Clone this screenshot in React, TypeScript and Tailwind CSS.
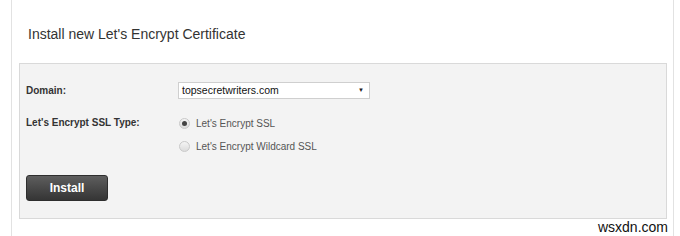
import React from 'react';

const Radio: React.FC<{ checked?: boolean; label: string }> = ({ checked, label }) => (
  <label className="flex items-center gap-[6px] h-[12px] text-[10px] text-[#555]">
    <span className="w-[11px] h-[11px] rounded-full border border-[#c9c9c9] bg-gradient-to-b from-[#f4f4f4] to-[#dcdcdc] flex items-center justify-center">
      {checked && <span className="w-[5px] h-[5px] rounded-full bg-[#444]" />}
    </span>
    <span>{label}</span>
  </label>
);

export default function App() {
  return (
    <div className="w-[680px] h-[236px] bg-white relative overflow-hidden" style={{ fontFamily: '"Liberation Sans", Arial, sans-serif' }}>
      <div className="ml-[11px] mr-[6px] h-full border-l border-r border-[#e2e2e2] pt-[26px] pl-[16px] pr-[6px]">
        <h2 className="text-[14px] leading-[16px] text-[#333] mb-[21px]">Install new Let's Encrypt Certificate</h2>
        <div className="-ml-[9px] border border-[#d9d9d9] bg-[#f3f3f3] h-[156px] pl-[6px] pt-[18px]">
          <div className="grid grid-cols-[152px_1fr] items-center">
            <div className="text-[10px] font-bold text-[#333]">Domain:</div>
            <div className="w-[192px] h-[17px] bg-white border border-[#cfcfcf] flex items-center justify-between pl-[3px] pr-[5px] text-[10.5px] text-[#111]">
              <span>topsecretwriters.com</span>
              <span className="text-[6px] text-[#222]">▼</span>
            </div>
          </div>
          <div className="grid grid-cols-[152px_1fr] mt-[18px]">
            <div className="text-[10px] font-bold text-[#333] leading-[12px]">Let's Encrypt SSL Type:</div>
            <div className="flex flex-col gap-[11px] pl-[1px]">
              <Radio checked label="Let's Encrypt SSL" />
              <Radio label="Let's Encrypt Wildcard SSL" />
            </div>
          </div>
          <button className="mt-[23px] w-[82px] h-[26px] rounded-[3px] bg-gradient-to-b from-[#5e5e5e] to-[#353535] border border-[#2e2e2e] text-white text-[12px] font-bold">
            Install
          </button>
        </div>
      </div>
      <div className="absolute right-[12px] bottom-[1px] text-[14px] leading-[16px] text-[#111]">wsxdn.com</div>
    </div>
  );
}
